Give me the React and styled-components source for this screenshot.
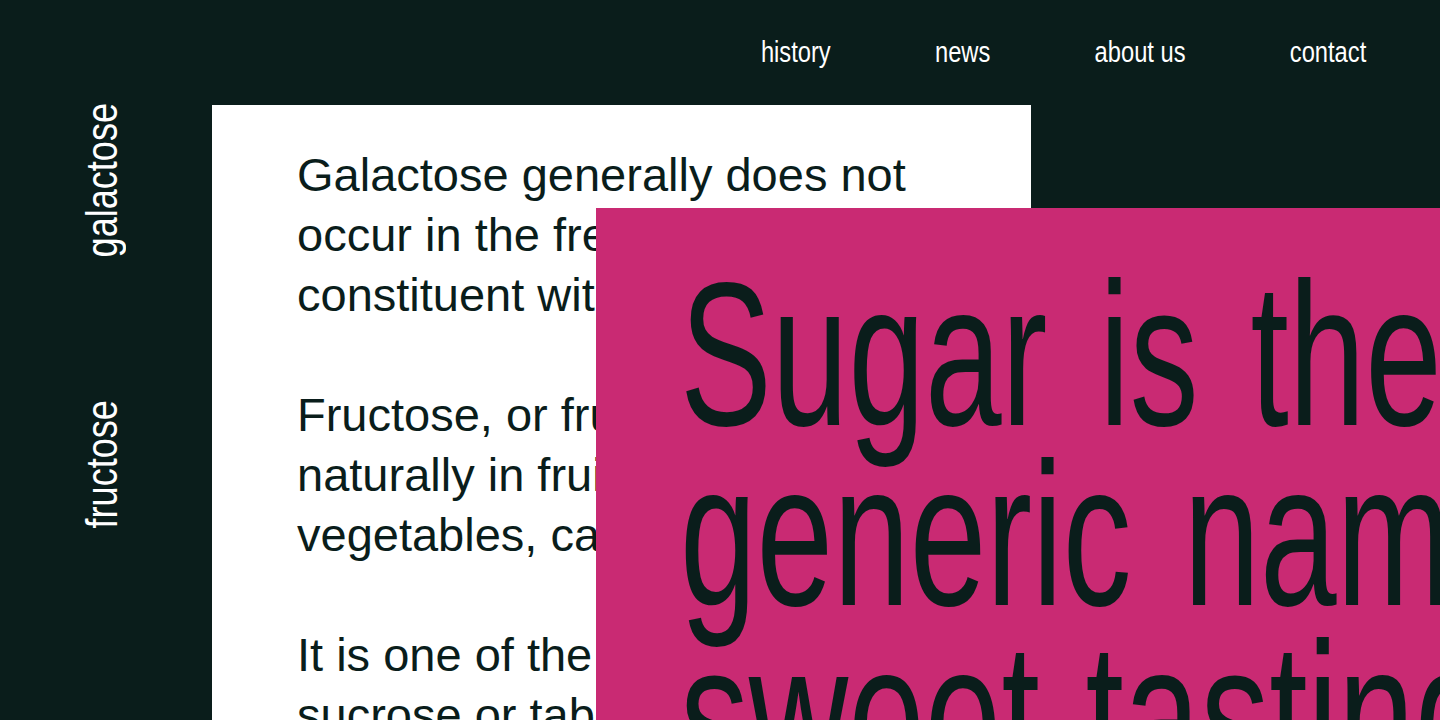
import React from "react";
import styled, { createGlobalStyle } from "styled-components";

const INK = "#0a1d1b";
const PINK = "#c92a73";
const SANS = `"Liberation Sans", Arial, sans-serif`;

const Global = createGlobalStyle`
  html, body {
    margin: 0;
    padding: 0;
    background: ${INK};
    overflow: hidden;
  }
  #root { height: 720px; }
`;

const Page = styled.div`
  width: 1440px;
  height: 720px;
  background: ${INK};
  overflow: hidden;
  display: grid;
  grid-template-columns: 212px 384px 435px 1fr;
  grid-template-rows: 105px 103px 1fr;
`;

const Header = styled.header`
  grid-column: 2 / 5;
  grid-row: 1;
  box-sizing: border-box;
  padding: 35px 74px 0 0;
  display: flex;
  justify-content: flex-end;
  align-items: flex-start;
`;

const Nav = styled.nav`
  display: flex;
  gap: 132px;
  transform: scaleX(0.79);
  transform-origin: right top;
`;

const NavLink = styled.a`
  font-family: ${SANS};
  font-size: 30px;
  line-height: normal;
  color: #ffffff;
  text-decoration: none;
  cursor: pointer;
`;

const Sidebar = styled.aside`
  grid-column: 1;
  grid-row: 1 / 4;
  box-sizing: border-box;
  padding: 86px 8px 0 0;
  display: flex;
  flex-direction: column;
  align-items: center;
  gap: 112px;
`;

const SideLabel = styled.span`
  font-family: ${SANS};
  font-size: 44px;
  line-height: 44px;
  color: #ffffff;
  writing-mode: vertical-rl;
  transform: rotate(180deg) scaleY(0.82);
  transform-origin: center;
`;

const WhiteCard = styled.section`
  grid-column: 2 / 4;
  grid-row: 2 / 4;
  background: #ffffff;
  box-sizing: border-box;
  padding: 40px 85px 0 85px;
  overflow: hidden;
`;

const Para = styled.p`
  margin: 0 0 60px 0;
  font-family: ${SANS};
  font-size: 47px;
  line-height: 60px;
  color: ${INK};
`;

const PinkCard = styled.section`
  grid-column: 3 / 5;
  grid-row: 3;
  z-index: 1;
  background: ${PINK};
  box-sizing: border-box;
  padding: 56px 0 0 84px;
  overflow: hidden;
`;

const BigText = styled.h1`
  margin: 0;
  font-family: ${SANS};
  font-weight: 400;
  font-size: 204px;
  line-height: 180px;
  word-spacing: 20px;
  color: ${INK};
  white-space: nowrap;
  transform: scaleX(0.675);
  transform-origin: left top;
`;

export default function App() {
  return (
    <>
      <Global />
      <Page>
        <Header>
          <Nav>
            <NavLink>history</NavLink>
            <NavLink>news</NavLink>
            <NavLink>about us</NavLink>
            <NavLink>contact</NavLink>
          </Nav>
        </Header>
        <Sidebar>
          <SideLabel>galactose</SideLabel>
          <SideLabel>fructose</SideLabel>
        </Sidebar>
        <WhiteCard>
          <Para>
            Galactose generally does not occur in the free state but is a
            constituent with glucose.
          </Para>
          <Para>
            Fructose, or fruit sugar, occurs naturally in fruits, some root
            vegetables, cane sugar.
          </Para>
          <Para>It is one of the components of sucrose or table sugar.</Para>
        </WhiteCard>
        <PinkCard>
          <BigText>
            Sugar is the
            <br />
            generic name for
            <br />
            sweet-tasting, soluble
          </BigText>
        </PinkCard>
      </Page>
    </>
  );
}
